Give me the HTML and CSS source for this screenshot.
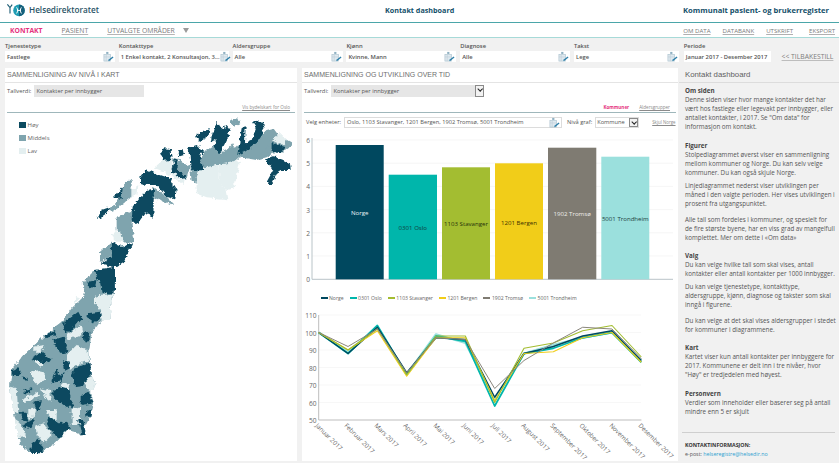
FILE: index.html
```html
<!DOCTYPE html>
<html lang="no">
<head>
<meta charset="utf-8">
<title>Kontakt dashboard</title>
<link rel="stylesheet" href="styles.css">
</head>
<body>
<svg class="defs" width="0" height="0">
  <symbol id="pick" viewBox="0 0 12 12">
    <rect x="1" y="4" width="7" height="7" fill="#dfe9ef" stroke="#a9c0cd" stroke-width=".7"/>
    <path d="M1 6.5h7M3.5 4v7" stroke="#b9ccd6" stroke-width=".6"/>
    <rect x="3.5" y="1" width="2.4" height="2.2" fill="#8fb0c2"/>
    <path d="M6 10.5 11 6.5" stroke="#2f7fa8" stroke-width="1.4"/>
  </symbol>
  <filter id="rough" x="-5%" y="-5%" width="110%" height="110%">
    <feTurbulence type="fractalNoise" baseFrequency=".08" numOctaves="3" seed="4"/>
    <feDisplacementMap in="SourceGraphic" scale="16" xChannelSelector="R" yChannelSelector="G"/>
    <feGaussianBlur stdDeviation="1.1"/>
  </filter>
</svg>

<header class="topbar">
  <div class="brand">
    <svg class="logo" viewBox="0 0 20 14" width="20" height="14">
      <circle cx="13" cy="7.4" r="5.8" fill="#1f9db3"/>
      <path d="M13 1.6a5.8 5.8 0 0 1 0 11.6z" fill="#17607c"/>
      <path d="M10.6 4.4c1.4 2 1.4 4 0 6M15.4 4.4c-1.4 2-1.4 4 0 6M11 7.4h4" stroke="#fff" stroke-width="1" fill="none"/>
      <path d="M1.4 1.4 4 4.6l2.2-3M4 4.6v6" stroke="#1a5a72" stroke-width="1.1" fill="none"/>
    </svg>
    <span class="brand-name">Helsedirektoratet</span>
  </div>
  <div class="top-title">Kontakt dashboard</div>
  <div class="top-register">Kommunalt pasient- og brukerregister</div>
</header>

<nav class="navbar">
  <div class="tabs">
    <a class="tab tab-active">KONTAKT</a>
    <a class="tab">PASIENT</a>
    <a class="tab">UTVALGTE OMRÅDER</a>
    <span class="tab-arrow"></span>
  </div>
  <div class="links">
    <a>OM DATA</a><a>DATABANK</a><a>UTSKRIFT</a><a>EKSPORT</a>
  </div>
</nav>

<section class="filters">
  <div class="filter"><label>Tjenestetype</label><div class="field"><span>Fastlege</span><svg class="pick"><use href="#pick"/></svg></div></div>
  <div class="filter"><label>Kontakttype</label><div class="field"><span>1 Enkel kontakt, 2 Konsultasjon, 3...</span><svg class="pick"><use href="#pick"/></svg></div></div>
  <div class="filter"><label>Aldersgruppe</label><div class="field"><span>Alle</span><svg class="pick"><use href="#pick"/></svg></div></div>
  <div class="filter"><label>Kjønn</label><div class="field"><span>Kvinne, Mann</span><svg class="pick"><use href="#pick"/></svg></div></div>
  <div class="filter"><label>Diagnose</label><div class="field"><span>Alle</span><svg class="pick"><use href="#pick"/></svg></div></div>
  <div class="filter filter-last"><label>Takst</label><div class="field"><span>Lege</span><svg class="pick"><use href="#pick"/></svg></div></div>
  <div class="filter filter-period"><label>Periode</label><div class="field"><span>Januar 2017 - Desember 2017</span></div></div>
  <a class="reset">&lt;&lt; TILBAKESTILL</a>
</section>

<main class="main">
  <section class="panel panel-map">
    <h2 class="panel-title">SAMMENLIGNING AV NIVÅ I KART</h2>
    <div class="value-row"><span>Tallverdi:</span><div class="value-box value-short">Kontakter per innbygger</div></div>
    <div class="sub-row"><a class="mini-link">Vis bydelskart for Oslo</a></div>
    <div class="map-wrap">
      <ul class="map-legend">
        <li><i class="sw sw-high"></i>Høy</li>
        <li><i class="sw sw-mid"></i>Middels</li>
        <li><i class="sw sw-low"></i>Lav</li>
      </ul>
      <svg class="map" viewBox="5 113 292 348" width="292" height="348">
        <g transform="translate(0,110) scale(.3333)">
          <g filter="url(#rough)">
            <g fill="#7fa4ae">
              <polygon points="570,170 600,150 640,150 680,155 710,110 760,100 800,60 820,55 835,75 878,100 870,112 845,128 815,132 800,142 770,150 720,142 700,160 655,165 600,175 590,205 602,222 575,212"/>
              <polygon points="600,150 612,125 640,110 660,130 680,120 700,100 712,135 700,160"/>
              <polygon points="735,125 770,100 790,70 800,60 810,100 770,150"/>
              <polygon points="515,150 530,145 570,170 560,205 530,170"/>
              <polygon points="460,230 500,260 525,285 490,275 460,265"/>
              <polygon points="345,290 370,225 395,205 395,260 345,300"/>
              <polygon points="350,320 400,300 395,345 405,395 380,400 360,385 350,360"/>
              <polygon points="300,425 335,395 335,440 300,455"/>
              <polygon points="245,520 285,480 300,545 270,545"/>
              <polygon points="690,30 712,25 718,40 700,48"/>
              <polygon points="320,300 345,285 360,290 335,305"/>
            </g>
            <g fill="#e4eff0">
              <polygon points="590,205 600,175 655,165 660,215 680,240 685,268 620,262 590,250"/>
              <polygon points="655,165 720,152 710,200 700,235 680,240 660,215"/>
              <polygon points="820,88 840,68 860,88 855,105 825,98"/>
              <polygon points="460,175 490,150 515,150 520,175 555,205 550,225 525,205 500,190"/>
              <polygon points="395,240 415,225 412,255 395,262"/>
              <polygon points="335,370 360,365 370,395 345,395"/>
            </g>
            <g fill="#0b4a60">
              <polygon points="585,80 610,62 632,58 625,78 600,95"/>
              <polygon points="640,60 650,35 665,55 680,45 692,60 680,90 660,130 640,110 650,90 632,95"/>
              <polygon points="712,135 725,55 737,48 735,100 755,90 770,50 760,35 780,30 795,45 785,60 790,70 770,100 735,125"/>
              <polygon points="795,148 820,138 850,150 870,160 872,180 845,180 830,190 812,228 802,212 820,180"/>
              <polygon points="815,98 858,112 845,130 815,125"/>
              <polygon points="480,128 495,115 512,118 515,150 490,152"/>
              <polygon points="533,125 548,117 552,135 535,140"/>
              <polygon points="560,115 590,105 612,125 600,135 610,180 575,183 572,135"/>
              <polygon points="515,190 525,145 533,150 530,170 560,205 540,207 525,190"/>
              <polygon points="420,205 440,178 465,190 510,205 530,240 525,268 500,260 470,225 440,225 420,222"/>
              <polygon points="398,290 420,260 445,240 462,235 460,320 435,310 410,345 395,330"/>
              <polygon points="340,260 368,230 365,265 345,267"/>
              <polygon points="290,330 305,300 332,290 320,310"/>
              <polygon points="335,395 365,410 397,400 372,455 345,472 300,460 335,440"/>
              <polygon points="285,480 345,470 345,545 300,545"/>
            </g>
          </g>
        </g>
        <g transform="translate(0,280) scale(.3333)">
          <g filter="url(#rough)">
            <polygon fill="#7fa4ae" points="255,0 345,0 340,40 330,90 332,120 305,120 275,160 268,210 272,285 290,310 270,335 282,370 270,410 255,440 250,468 225,455 205,450 160,495 120,520 90,518 60,490 50,440 40,390 30,320 35,270 70,225 130,170 190,120 215,85 250,50"/>
            <g fill="#e4eff0">
              <polygon points="285,50 340,40 330,80 332,120 305,120 300,90 285,70"/>
              <polygon points="200,165 245,135 250,160 205,180"/>
              <polygon points="200,225 230,195 268,215 268,240 230,255 210,270"/>
              <polygon points="255,300 275,290 290,310 272,335 258,325"/>
              <polygon points="90,275 120,270 140,295 115,315 100,300"/>
              <polygon points="180,310 210,310 205,325 185,322"/>
              <polygon points="120,325 150,330 155,365 135,350"/>
              <polygon points="70,355 115,335 120,345 90,365 70,365"/>
              <polygon points="135,390 170,390 170,420 150,410"/>
              <polygon points="215,385 240,380 240,430 215,435"/>
              <polygon points="105,440 130,430 155,465 130,490 110,460"/>
              <polygon points="45,420 60,430 80,470 55,475"/>
              <polygon points="30,320 50,325 55,400 40,395"/>
              <polygon points="105,235 130,240 125,260 105,250"/>
              <polygon points="85,390 105,385 100,420 85,415"/>
              <polygon points="100,200 135,195 120,215 100,215"/>
              <polygon points="225,50 240,55 225,70"/>
            </g>
            <g fill="#0b4a60">
              <polygon points="190,130 235,95 245,115 215,150 195,160"/>
              <polygon points="265,100 300,95 302,115 280,128 262,115"/>
              <polygon points="248,160 268,155 265,185 250,183"/>
              <polygon points="130,170 165,150 170,165 135,175"/>
              <polygon points="160,180 190,170 205,215 185,220 165,195"/>
              <polygon points="95,235 125,215 155,240 125,250 115,240 100,245"/>
              <polygon points="190,240 205,240 210,265 195,272"/>
              <polygon points="225,262 255,255 272,245 272,285 250,315 225,318 215,285"/>
              <polygon points="155,300 170,265 175,285 195,280 180,305 155,308"/>
              <polygon points="35,270 55,265 65,280 50,290 35,285"/>
              <polygon points="60,295 80,290 80,300"/>
              <polygon points="70,330 100,325 85,340 75,340"/>
              <polygon points="160,330 185,320 205,325 215,365 225,380 200,380 175,365 160,350"/>
              <polygon points="245,345 265,335 282,370 245,375"/>
              <polygon points="100,365 125,360 120,390 110,390"/>
              <polygon points="60,395 80,395 85,425 65,420"/>
              <polygon points="70,435 105,415 95,440 75,445"/>
              <polygon points="150,410 175,430 200,425 210,445 175,475 150,450 140,430"/>
              <polygon points="255,400 275,390 270,410 258,410"/>
              <polygon points="95,490 115,475 130,505 125,520 90,518"/>
              <polygon points="235,420 250,420 257,465 245,465"/>
              <polygon points="262,5 290,0 285,20 268,25"/>
              <polygon points="300,0 345,0 340,40 305,40"/>
            </g>
          </g>
        </g>
      </svg>
    </div>
  </section>

  <section class="panel panel-charts">
    <h2 class="panel-title">SAMMENLIGNING OG UTVIKLING OVER TID</h2>
    <div class="value-row"><span>Tallverdi:</span><div class="value-box value-long">Kontakter per innbygger<i class="drop"></i></div></div>
    <div class="sub-row sub-tabs"><a class="mini-active">Kommuner</a><a class="mini-link">Aldersgrupper</a></div>
    <div class="unit-row">
      <span>Velg enheter:</span>
      <div class="unit-box"><span>Oslo, 1103 Stavanger, 1201 Bergen, 1902 Tromsø, 5001 Trondheim</span><svg class="pick"><use href="#pick"/></svg></div>
      <span class="level-label">Nivå graf:</span>
      <div class="level-box">Kommune<i class="drop"></i></div>
      <a class="mini-link hide-norway">Skjul Norge</a>
    </div>
    <svg class="bars" viewBox="302 131 376 158" width="376" height="158">
      <g stroke="#f2f2f2" stroke-width=".7">
        <path d="M312 140H673M312 163.2H673M312 186.4H673M312 209.6H673M312 232.8H673M312 256H673"/>
      </g>
      <path d="M312 138V279.3H673" fill="none" stroke="#b9c4c8" stroke-width="1"/>
      <g class="axis-text" text-anchor="end">
        <text x="310" y="143">6</text><text x="310" y="166.2">5</text><text x="310" y="189.4">4</text><text x="310" y="212.6">3</text><text x="310" y="235.8">2</text><text x="310" y="259">1</text><text x="310" y="282.3">0</text>
      </g>
      <rect x="335.7" y="145" width="48" height="134.3" fill="#00485f"/>
      <rect x="388.7" y="174.7" width="48.3" height="104.6" fill="#00b6ab"/>
      <rect x="442" y="167.3" width="48" height="112" fill="#a3bd31"/>
      <rect x="495" y="163.3" width="48" height="116" fill="#f1cd19"/>
      <rect x="548" y="147.7" width="48.3" height="131.6" fill="#7f7b72"/>
      <rect x="601.3" y="156.7" width="48" height="122.6" fill="#9be0dd"/>
      <g class="bar-text" text-anchor="middle">
        <text x="359.7" y="215" fill="#e8f2f4">Norge</text>
        <text x="412.8" y="230" fill="#0f3c3c">0301 Oslo</text>
        <text x="466" y="226" fill="#26300a">1103 Stavanger</text>
        <text x="519" y="224.5" fill="#3a3000">1201 Bergen</text>
        <text x="572.2" y="216" fill="#f0efec">1902 Tromsø</text>
        <text x="625.3" y="221" fill="#1d3f3e">5001 Trondheim</text>
      </g>
    </svg>
    <ul class="chart-legend">
      <li class="l1">Norge</li><li class="l2">0301 Oslo</li><li class="l3">1103 Stavanger</li><li class="l4">1201 Bergen</li><li class="l5">1902 Tromsø</li><li class="l6">5001 Trondheim</li>
    </ul>
    <svg class="lines" viewBox="302 306 376 155" width="376" height="155">
      <g stroke="#f4f4f4" stroke-width=".7">
        <path d="M319 315H641M319 332.5H641M319 350H641M319 367.5H641M319 385H641M319 402.5H641"/>
      </g>
      <path d="M318.7 315V420H641.4" fill="none" stroke="#bdbdbd" stroke-width="1"/>
      <g class="axis-text" text-anchor="end">
        <text x="316.5" y="318">110</text><text x="316.5" y="335.5">100</text><text x="316.5" y="353">90</text><text x="316.5" y="370.5">80</text><text x="316.5" y="388">70</text><text x="316.5" y="405.5">60</text><text x="316.5" y="423">50</text>
      </g>
      <g transform="translate(318.7,507.5) scale(29.33,-1.75)" fill="none" stroke-linejoin="round">
        <polyline class="ln" stroke="#9be0dd" stroke-width="2.2" points="0,100 1,89 2,103 3,76 4,99 5,94 6,62 7,88 8,93 9,97 10,100 11,84"/>
        <polyline class="ln" stroke="#00b6ab" stroke-width="1.8" points="0,100 1,88 2,104 3,76 4,98 5,95 6,58 7,88 8,91 9,97 10,100 11,83"/>
        <polyline class="ln" stroke="#00485f" stroke-width="1.4" points="0,100 1,88 2,103 3,77 4,97 5,96 6,63 7,88 8,92 9,98 10,101 11,84"/>
        <polyline class="ln" stroke="#f1cd19" stroke-width="1.1" points="0,100 1,90 2,101 3,75 4,97 5,97 6,61 7,88 8,89 9,97 10,100 11,83"/>
        <polyline class="ln" stroke="#a3bd31" stroke-width="1.1" points="0,100 1,90 2,102 3,76 4,98 5,98 6,60 7,91 8,94 9,101 10,104 11,86"/>
        <polyline class="ln" stroke="#8a867d" stroke-width="1" points="0,100 1,92 2,102 3,77 4,97 5,96 6,68 7,84 8,94 9,103 10,102 11,85"/>
      </g>
      <g class="axis-text rot">
        <text transform="translate(315,426) rotate(45)">Januar 2017</text>
        <text transform="translate(344,426) rotate(45)">Februar 2017</text>
        <text transform="translate(374,426) rotate(45)">Mars 2017</text>
        <text transform="translate(403,426) rotate(45)">April 2017</text>
        <text transform="translate(433,426) rotate(45)">Mai 2017</text>
        <text transform="translate(462,426) rotate(45)">Juni 2017</text>
        <text transform="translate(491,426) rotate(45)">Juli 2017</text>
        <text transform="translate(521,426) rotate(45)">August 2017</text>
        <text transform="translate(550,426) rotate(45)">September 2017</text>
        <text transform="translate(579,426) rotate(45)">Oktober 2017</text>
        <text transform="translate(609,426) rotate(45)">November 2017</text>
        <text transform="translate(638,426) rotate(45)">Desember 2017</text>
      </g>
    </svg>
  </section>

  <aside class="side">
    <h2 class="side-title">Kontakt dashboard</h2>
    <div class="side-body">
      <p class="gap-0"><b>Om siden</b><br>Denne siden viser hvor mange kontakter det har vært hos fastlege eller legevakt per innbygger, eller antallet kontakter, i 2017. Se "Om data" for informasjon om kontakt.</p>
      <p class="gap-l"><b>Figurer</b><br>Stolpediagrammet øverst viser en sammenligning mellom kommuner og Norge. Du kan selv velge kommuner. Du kan også skjule Norge.</p>
      <p class="gap-s">Linjediagrammet nederst viser utviklingen per måned i den valgte perioden. Her vises utviklingen i prosent fra utgangspunktet.</p>
      <p class="gap-m">Alle tall som fordeles i kommuner, og spesielt for de fire største byene, har en viss grad av mangelfull komplettet. Mer om dette i «Om data»</p>
      <p class="gap-l"><b>Valg</b><br>Du kan velge hvilke tall som skal vises, antall kontakter eller antall kontakter per 1000 innbygger.</p>
      <p class="gap-s">Du kan velge tjenestetype, kontakttype, aldersgruppe, kjønn, diagnose og takster som skal inngå i figurene.</p>
      <p class="gap-m">Du kan velge at det skal vises aldersgrupper i stedet for kommuner i diagrammene.</p>
      <p class="gap-l"><b>Kart</b><br>Kartet viser kun antall kontakter per innbyggere for 2017. Kommunene er delt inn i tre nivåer, hvor "Høy" er tredjedelen med høyest.</p>
      <p class="gap-l"><b>Personvern</b><br>Verdier som inneholder eller baserer seg på antall mindre enn 5 er skjult</p>
    </div>
    <div class="side-contact">
      <b>KONTAKTINFORMASJON:</b><br>e-post: <a>helseregistre@helsedir.no</a>
    </div>
  </aside>
</main>
</body>
</html>
```
FILE: styles.css
```css
* { box-sizing: border-box; }
html, body { margin: 0; padding: 0; }
body {
  width: 839px;
  height: 463px;
  overflow: hidden;
  background: #f1f1f1;
  font-family: "Open Sans", "Liberation Sans", sans-serif;
  color: #444;
}
a { color: inherit; }
ul { list-style: none; margin: 0; padding: 0; }
h2, p { margin: 0; font-weight: normal; }
.defs { position: absolute; }

/* Top bar */
.topbar {
  height: 23px;
  background: #fff;
  border-bottom: 1px solid #4ba6a9;
  display: flex;
  align-items: center;
  padding-bottom: 3px;
  color: #14506a;
}
.brand { width: 385px; padding-left: 6px; display: flex; align-items: center; gap: 3px; }
.logo { flex: none; }
.brand-name { font-size: 8.2px; font-weight: 600; color: #2a5366; }
.top-title { width: 298px; font-size: 7.2px; font-weight: 700; }
.top-register { font-size: 7.6px; font-weight: 700; }

/* Nav */
.navbar {
  height: 15px;
  background: #fff;
  border-bottom: 1px solid #a7dad8;
  display: flex;
  justify-content: space-between;
  align-items: center;
  padding: 0 4px 0 10px;
  font-size: 6.1px;
  color: #7a7a7a;
}
.tabs { display: flex; align-items: center; gap: 19px; }
.tab { text-decoration: underline; text-decoration-color: #b5b5b5; font-size: 6.8px; }
.tab-active { color: #e5337e; font-weight: 700; text-decoration: none; }
.tab-arrow {
  margin-left: -11px;
  width: 0; height: 0;
  border-left: 3.5px solid transparent;
  border-right: 3.5px solid transparent;
  border-top: 5px solid #9a9a9a;
}
.links { display: flex; gap: 12px; }
.links a { text-decoration: underline; text-decoration-color: #b0b0b0; }
.links a:last-child { margin-left: 4px; }

/* Filters */
.filters {
  height: 30px;
  display: flex;
  padding: 4px 0 0 5px;
  gap: 3.8px;
  font-size: 5.8px;
}
.filter { width: 110px; flex: none; }
.filter-last { width: 105px; }
.filter-period { width: 87px; margin-left: 1px; }
.filter label { display: block; height: 9px; line-height: 9px; font-weight: 600; color: #555; }
.field {
  height: 11px;
  background: #fff;
  display: flex;
  align-items: center;
  justify-content: space-between;
  padding: 0 1px 0 2px;
  font-weight: 600;
  color: #555;
  white-space: nowrap;
}
.pick { width: 11px; height: 11px; flex: none; }
.reset {
  margin: 10px 0 0 7px;
  font-size: 6.8px;
  color: #7d7d7d;
  text-decoration: underline;
  text-decoration-color: #bdbdbd;
  white-space: nowrap;
}

/* Layout */
.main { height: 393px; display: flex; padding-left: 5px; }
.panel { background: #fff; height: 393px; }
.panel-map { width: 292px; position: relative; }
.panel-charts { width: 376px; margin-left: 5px; }
.panel-title {
  height: 15px;
  line-height: 14px;
  padding-left: 2px;
  border-bottom: 1px solid #e4e4e4;
  font-family: "Liberation Sans", Arial, sans-serif;
  font-size: 7px;
  color: #6e6e6e;
  white-space: nowrap;
}
.value-row {
  height: 15px;
  padding: 2px 0 0 2px;
  display: flex;
  align-items: flex-start;
  font-size: 5.8px;
  color: #555;
  gap: 3px;
}
.value-row > span { line-height: 13px; }
.value-box {
  height: 12px;
  line-height: 13px;
  background: #e6e6e6;
  padding-left: 2px;
  position: relative;
  color: #555;
}
.value-short { width: 110px; }
.value-long { width: 153px; }
.drop {
  position: absolute;
  right: 0;
  top: 0;
  width: 9px;
  height: 100%;
  background: #f2f2f2;
  border: 1px solid #8a8a8a;
}
.drop::after {
  content: "";
  position: absolute;
  left: 1.7px;
  top: 1px;
  width: 3.4px;
  height: 3.4px;
  border-right: 1.1px solid #222;
  border-bottom: 1.1px solid #222;
  transform: rotate(45deg);
}
.sub-row {
  height: 15px;
  margin: 0 2px;
  border-bottom: 1px solid #9fb7bb;
  display: flex;
  justify-content: flex-end;
  align-items: flex-end;
  padding: 0 5px 2px 0;
  font-size: 4.6px;
}
.sub-tabs { gap: 10px; padding-right: 6px; }
.mini-link { color: #8b8b8b; text-decoration: underline; white-space: nowrap; }
.mini-active { color: #e5337e; font-weight: 700; }

/* Map */
.map-wrap { position: relative; height: 348px; }
.map { display: block; }
.map-legend {
  position: absolute;
  left: 14px;
  top: 5.5px;
  font-size: 6px;
  color: #666;
}
.map-legend li { display: flex; align-items: center; gap: 2px; height: 13px; }
.sw { width: 6.5px; height: 6px; display: block; }
.sw-high { background: #0b4a60; }
.sw-mid { background: #7fa4ae; }
.sw-low { background: #e4eff0; }

/* Charts */
.unit-row {
  height: 18px;
  display: flex;
  align-items: center;
  font-size: 5.7px;
  color: #555;
  padding-left: 4px;
  white-space: nowrap;
}
.unit-box {
  width: 218px;
  height: 11px;
  margin-left: 3px;
  border: 1px solid #dcdcdc;
  display: flex;
  align-items: center;
  justify-content: space-between;
  padding: 0 1px 0 2px;
  white-space: nowrap;
}
.level-label { margin-left: 5px; }
.level-box {
  width: 44px;
  height: 11px;
  line-height: 9px;
  margin-left: 3px;
  border: 1px solid #dcdcdc;
  position: relative;
  padding-left: 1px;
}
.hide-norway { margin-left: 13px; font-size: 4.4px; }
.bars, .lines { display: block; }
.chart-legend {
  height: 17px;
  display: flex;
  align-items: center;
  padding-left: 18.5px;
  gap: 6px;
  font-size: 5.1px;
  color: #666;
}
.chart-legend li { display: flex; align-items: center; gap: 1.5px; white-space: nowrap; }
.chart-legend li::before { content: ""; width: 7px; height: 2px; background: var(--c); }
.l1 { --c: #00485f; }
.l2 { --c: #00b6ab; }
.l3 { --c: #a3bd31; }
.l4 { --c: #f1cd19; }
.l5 { --c: #7f7b72; }
.l6 { --c: #9be0dd; }
.axis-text { font-size: 6.6px; fill: #666; }
.rot { font-size: 6.3px; }
.bar-text { font-size: 6.1px; }
.ln { vector-effect: non-scaling-stroke; }

/* Sidebar */
.side { width: 161px; height: 393px; position: relative; display: flex; flex-direction: column; }
.side-title {
  height: 15px;
  line-height: 14px;
  margin-left: 1px;
  padding-left: 6px;
  border-bottom: 1px solid #dcdcdc;
  font-family: "Liberation Sans", Arial, sans-serif;
  font-size: 7.8px;
  color: #5f5f5f;
}
.side-body { padding: 3px 3px 0 7px; font-size: 6.25px; line-height: 9.1px; color: #555; flex: 1; }
.side-body b { font-weight: 700; color: #444; }
.gap-0 { margin-top: 0; }
.gap-s { margin-top: 3.6px; }
.gap-m { margin-top: 6.6px; }
.gap-l { margin-top: 9.2px; }
.side-contact {
  margin: 0 4px 2.5px 4px;
  padding: 8px 0 0 3px;
  border-top: 1px solid #cfcfcf;
  font-size: 5.3px;
  line-height: 9px;
  color: #555;
}
.side-contact b { color: #333; }
.side-contact a { color: #2f9fd0; }
```
